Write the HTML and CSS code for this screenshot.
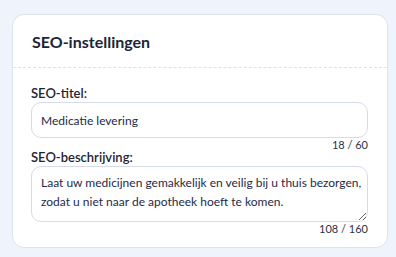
FILE: index.html
```html
<!DOCTYPE html>
<html lang="nl">
<head>
    <meta charset="UTF-8">
    <meta name="viewport" content="width=device-width, initial-scale=1.0">
    <title>SEO-instellingen</title>
    <link rel="stylesheet" href="styles.css">
</head>
<body>
    <div class="card">
        <div class="card-header">
            <h2>SEO-instellingen</h2>
        </div>
        <div class="card-body">
            <label for="seoTitel">SEO-titel:</label>
            <input type="text" id="seoTitel" value="Medicatie levering">
            <div class="teller">18 / 60</div>

            <label for="seoBeschrijving">SEO-beschrijving:</label>
            <textarea id="seoBeschrijving" rows="2">Laat uw medicijnen gemakkelijk en veilig bij u thuis bezorgen, zodat u niet naar de apotheek hoeft te komen.</textarea>
            <div class="teller">108 / 160</div>
        </div>
    </div>
</body>
</html>
```

FILE: styles.css
```css
body {
    font-family: 'Lato', sans-serif;
    background-color: #eff3fb;
    margin: 0;
    padding: 14px 8px 0 12px;
}

.card {
    background-color: #ffffff;
    border: 1px solid #dde3ee;
    border-radius: 12px;
    padding-bottom: 13px;
}

.card-header {
    height: 52px;
    display: flex;
    align-items: center;
    padding: 0 19px;
    border-bottom: 1px dashed #dde2ea;
}

.card-header h2 {
    margin: 0;
    font-size: 16px;
    font-weight: 700;
    color: #1c2537;
}

.card-body {
    display: flex;
    flex-direction: column;
    padding: 18px 19px 0 18px;
}

label {
    font-size: 13px;
    font-weight: 600;
    color: #1f2533;
    line-height: 14px;
    margin-bottom: 2px;
}

input,
textarea {
    font-family: inherit;
    font-size: 12px;
    color: #1e2a4a;
    border: 1px solid #d5dbe9;
    border-radius: 10px;
    padding: 0 9px;
    background-color: #ffffff;
    box-sizing: border-box;
    width: 100%;
    margin: 0;
}

input {
    height: 36px;
}

textarea {
    height: 56px;
    padding: 7px 3px 0 9px;
    line-height: 18.7px;
    resize: vertical;
}

.teller {
    align-self: flex-end;
    font-size: 11px;
    line-height: 11px;
    color: #2a3347;
    margin-top: 1px;
}
```
